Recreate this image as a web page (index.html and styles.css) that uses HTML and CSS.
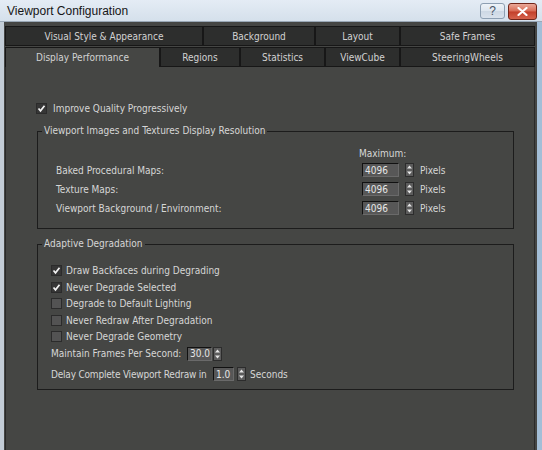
FILE: index.html
```html
<!DOCTYPE html>
<html lang="en">
<head>
<meta charset="utf-8">
<title>Viewport Configuration</title>
<link rel="stylesheet" href="styles.css">
</head>
<body>
<div class="window">
  <header class="titlebar">
    <span class="title">Viewport Configuration</span>
    <div class="caption-buttons">
      <span class="cbtn help">?</span>
      <span class="cbtn close"><svg width="11" height="9" viewBox="0 0 11 9"><path d="M1.5 1 L9.5 8 M9.5 1 L1.5 8" stroke="#fff" stroke-width="2.2" stroke-linecap="round"/></svg></span>
    </div>
  </header>
  <div class="frame">
    <nav class="tabs">
      <div class="tabrow">
        <div class="tab t-vs">Visual Style &amp; Appearance</div>
        <div class="tab t-bg">Background</div>
        <div class="tab t-lay">Layout</div>
        <div class="tab t-safe">Safe Frames</div>
      </div>
      <div class="tabrow">
        <div class="tab active t-dp">Display Performance</div>
        <div class="tab t-reg">Regions</div>
        <div class="tab t-stat">Statistics</div>
        <div class="tab t-vc">ViewCube</div>
        <div class="tab t-sw">SteeringWheels</div>
      </div>
    </nav>
    <main class="panel">
      <div class="check top-check">
        <span class="box checked"><svg width="9" height="9" viewBox="0 0 9 9"><path d="M1.5 4.5 L3.5 6.8 L7.5 1.8" fill="none" stroke="#f2f2f2" stroke-width="1.7"/></svg></span>
        <span>Improve Quality Progressively</span>
      </div>

      <fieldset class="group g-res">
        <legend>Viewport Images and Textures Display Resolution</legend>
        <div class="res-body">
          <div class="res-row res-head"><span class="res-label"></span><span class="max">Maximum:</span></div>
          <div class="res-row res-data">
            <span class="res-label">Baked Procedural Maps:</span>
            <span class="spinner sp-res"><span class="field">4096</span><span class="arrows"><svg width="9" height="14" viewBox="0 0 9 14"><rect x="0.5" y="0.5" width="8" height="13" fill="#5c5c5c" stroke="#2c2c2c"/><path d="M2 5.5 L4.5 2.5 L7 5.5Z M2 8.5 L4.5 11.5 L7 8.5Z" fill="#e6e6e6"/></svg></span></span>
            <span class="unit">Pixels</span>
          </div>
          <div class="res-row res-data">
            <span class="res-label">Texture Maps:</span>
            <span class="spinner sp-res"><span class="field">4096</span><span class="arrows"><svg width="9" height="14" viewBox="0 0 9 14"><rect x="0.5" y="0.5" width="8" height="13" fill="#5c5c5c" stroke="#2c2c2c"/><path d="M2 5.5 L4.5 2.5 L7 5.5Z M2 8.5 L4.5 11.5 L7 8.5Z" fill="#e6e6e6"/></svg></span></span>
            <span class="unit">Pixels</span>
          </div>
          <div class="res-row res-data">
            <span class="res-label">Viewport Background / Environment:</span>
            <span class="spinner sp-res"><span class="field">4096</span><span class="arrows"><svg width="9" height="14" viewBox="0 0 9 14"><rect x="0.5" y="0.5" width="8" height="13" fill="#5c5c5c" stroke="#2c2c2c"/><path d="M2 5.5 L4.5 2.5 L7 5.5Z M2 8.5 L4.5 11.5 L7 8.5Z" fill="#e6e6e6"/></svg></span></span>
            <span class="unit">Pixels</span>
          </div>
        </div>
      </fieldset>

      <fieldset class="group g-deg">
        <legend>Adaptive Degradation</legend>
        <div class="deg-body">
          <div class="check deg-row">
            <span class="box checked"><svg width="9" height="9" viewBox="0 0 9 9"><path d="M1.5 4.5 L3.5 6.8 L7.5 1.8" fill="none" stroke="#f2f2f2" stroke-width="1.7"/></svg></span>
            <span>Draw Backfaces during Degrading</span>
          </div>
          <div class="check deg-row">
            <span class="box checked"><svg width="9" height="9" viewBox="0 0 9 9"><path d="M1.5 4.5 L3.5 6.8 L7.5 1.8" fill="none" stroke="#f2f2f2" stroke-width="1.7"/></svg></span>
            <span>Never Degrade Selected</span>
          </div>
          <div class="check deg-row">
            <span class="box"></span>
            <span>Degrade to Default Lighting</span>
          </div>
          <div class="check deg-row">
            <span class="box"></span>
            <span>Never Redraw After Degradation</span>
          </div>
          <div class="check deg-row">
            <span class="box"></span>
            <span>Never Degrade Geometry</span>
          </div>
          <div class="num-row maint">
            <span class="maint-label">Maintain Frames Per Second:</span>
            <span class="spinner sp-fps"><span class="field">30.0</span><span class="arrows"><svg width="9" height="14" viewBox="0 0 9 14"><rect x="0.5" y="0.5" width="8" height="13" fill="#5c5c5c" stroke="#2c2c2c"/><path d="M2 5.5 L4.5 2.5 L7 5.5Z M2 8.5 L4.5 11.5 L7 8.5Z" fill="#e6e6e6"/></svg></span></span>
          </div>
          <div class="num-row delay">
            <span class="delay-label">Delay Complete Viewport Redraw in</span>
            <span class="spinner sp-delay"><span class="field">1.0</span><span class="arrows"><svg width="9" height="14" viewBox="0 0 9 14"><rect x="0.5" y="0.5" width="8" height="13" fill="#5c5c5c" stroke="#2c2c2c"/><path d="M2 5.5 L4.5 2.5 L7 5.5Z M2 8.5 L4.5 11.5 L7 8.5Z" fill="#e6e6e6"/></svg></span></span>
            <span class="unit unit-sec">Seconds</span>
          </div>
        </div>
      </fieldset>
    </main>
  </div>
</div>
</body>
</html>
```

FILE: styles.css
```css
* { box-sizing: border-box; }
html, body { margin: 0; padding: 0; }
body {
  width: 542px;
  height: 450px;
  overflow: hidden;
  background: #454644;
  font-family: "DejaVu Sans Condensed", "DejaVu Sans", sans-serif;
  font-size: 10px;
  color: #d6d6d6;
}
.window { width: 542px; height: 450px; display: flex; flex-direction: column; }

.titlebar {
  flex: none;
  height: 22px;
  display: flex;
  align-items: center;
  justify-content: space-between;
  padding: 1px 5px 0 7px;
  background: linear-gradient(#e4ecf5, #d5e0eb);
  border-bottom: 1px solid #9aa8b7;
}
.title { font-family: "Liberation Sans", Arial, sans-serif; font-size: 12px; color: #151515; }
.caption-buttons { display: flex; align-items: center; gap: 3px; }
.cbtn { display: flex; align-items: center; justify-content: center; border-radius: 3px; }
.help {
  width: 25px; height: 16px;
  border: 1px solid #8d9fb2;
  background: linear-gradient(#eef3f8, #dde6ef 50%, #cdd8e4 51%, #d9e2ec);
  color: #4a5666;
  font-family: "Liberation Sans", Arial, sans-serif;
  font-size: 12px;
}
.close {
  width: 29px; height: 17px;
  border: 1px solid #712519;
  background: linear-gradient(#eaa898, #d86a54 48%, #c23f2a 52%, #d5634c);
}

.frame {
  flex: 1;
  min-height: 0;
  display: flex;
  flex-direction: column;
  border-left: 4px solid #c3cdd7;
  border-right: 5px solid #a3bed7;
  padding: 4px 2px 0 1px;
}

.tabs { flex: none; }
.tabrow { display: flex; height: 20px; }
.tabrow + .tabrow { margin-top: 1px; }
.tab {
  flex: none;
  height: 20px;
  display: flex;
  align-items: center;
  justify-content: center;
  white-space: nowrap;
  background: #2d2e2d;
  border: 1px solid #171717;
  color: #d2d2d2;
}
.tab.active { background: #454644; border-bottom: 0; }
.t-vs { width: 198px; }
.t-bg { width: 112px; }
.t-lay { width: 85px; }
.t-safe { width: 135px; }
.t-dp { width: 155px; }
.t-reg { width: 80px; }
.t-stat { width: 85px; }
.t-vc { width: 75px; }
.t-sw { width: 135px; }

.panel {
  flex: 1;
  white-space: nowrap;
  border-left: 1px solid #2a2a2a;
  border-right: 1px solid #2a2a2a;
  padding: 34px 20px 0 30px;
}

.check { display: flex; align-items: center; height: 14px; }
.box {
  flex: none;
  width: 11px; height: 11px;
  border: 1px solid #2b2b2b;
  background: #535353;
  margin-right: 4px;
  display: flex;
  align-items: center;
  justify-content: center;
}
.box.checked { background: #363636; }
.top-check .box { margin-right: 6px; }

.group {
  margin: 9px 0 0 1px;
  padding: 0;
  border: 1px solid #1c1c1c;
  min-width: 0;
}
.group legend {
  margin-left: 4px;
  padding: 0 2px;
  line-height: 14px;
  color: #d6d6d6;
}
.g-deg { margin-top: 8px; }

.res-body { padding: 8px 0 13px 18px; }
.res-row { display: flex; align-items: center; height: 14px; }
.res-data { margin-top: 5px; }
.res-head + .res-data { margin-top: 3px; }
.res-label { flex: none; width: 303px; }

.spinner { display: flex; align-items: center; flex: none; }
.field {
  height: 14px;
  display: flex;
  align-items: center;
  padding-left: 2px;
  background: #575757;
  border-top: 1px solid #111;
  border-left: 1px solid #111;
  border-right: 1px solid #6a6a6a;
  border-bottom: 1px solid #6a6a6a;
  color: #e6e6e6;
}
.arrows { display: flex; }
.sp-res { margin-left: 3px; }
.sp-res .field { width: 37px; }
.sp-res .arrows { margin-left: 6px; }
.unit { margin-left: 6px; }

.deg-body { padding: 11.5px 0 8px 13px; }
.deg-row { height: 16.5px; }
.num-row { display: flex; align-items: center; height: 14px; }
.maint { margin-top: 1.5px; }
.delay { margin-top: 6.5px; }
.maint-label { flex: none; width: 136px; }
.delay-label { flex: none; width: 162px; letter-spacing: -0.2px; }
.sp-fps .field { width: 25px; }
.sp-fps .arrows { margin-left: 1px; }
.sp-delay .field { width: 21px; }
.sp-delay .arrows { margin-left: 3px; }
.unit-sec { margin-left: 4px; }
```
